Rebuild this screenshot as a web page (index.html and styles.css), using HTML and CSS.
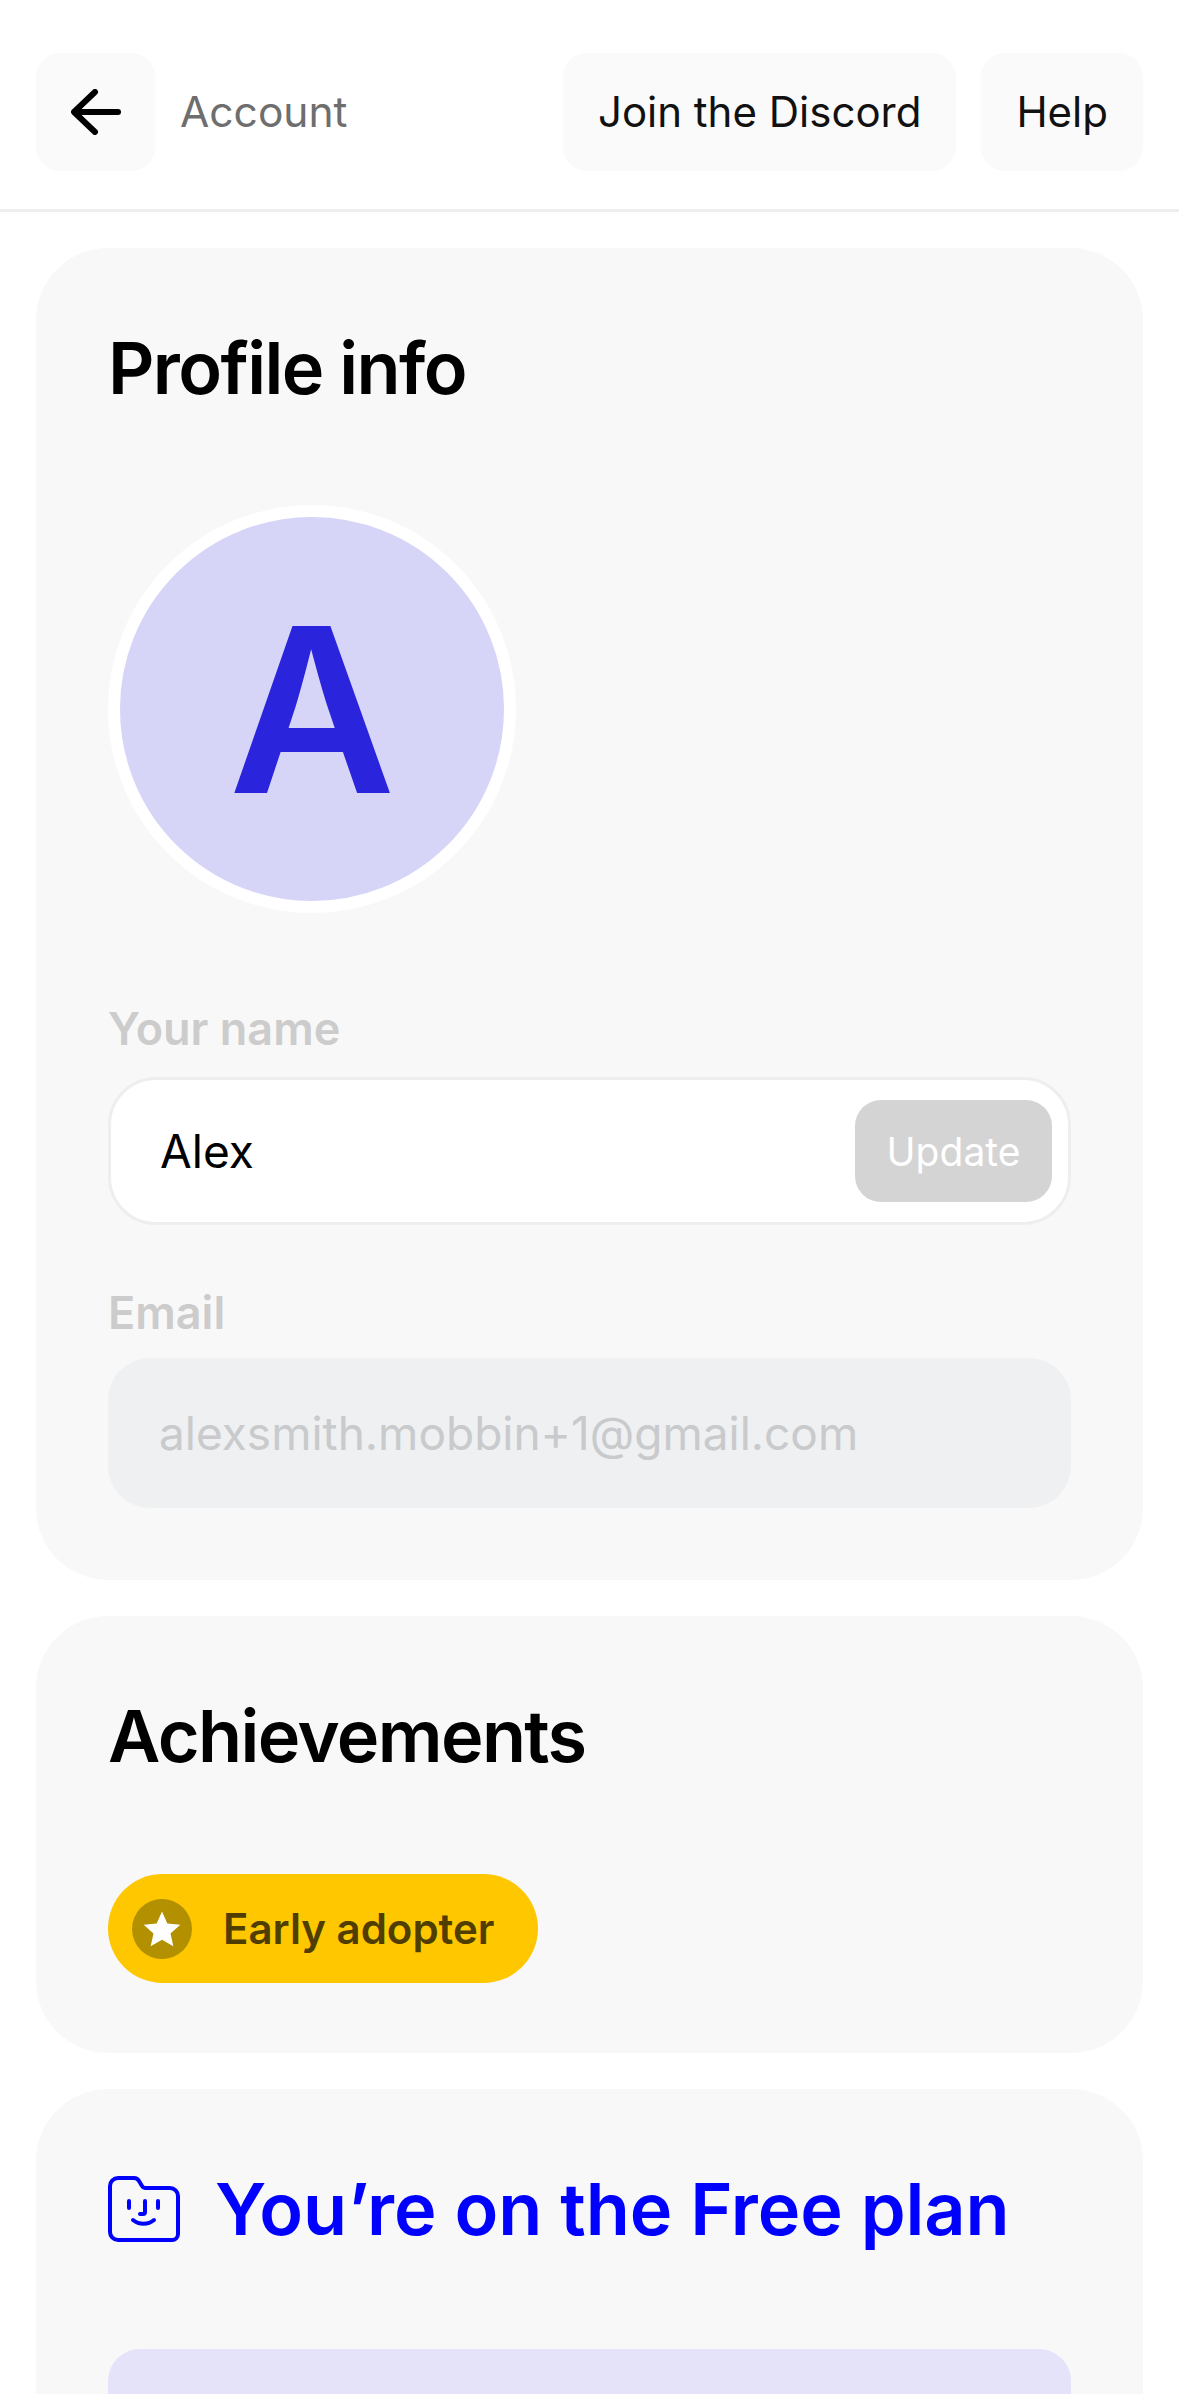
FILE: index.html
```html
<!DOCTYPE html>
<html lang="en">
<head>
    <meta charset="UTF-8">
    <meta name="viewport" content="width=device-width, initial-scale=1.0">
    <title>Account</title>
    <link rel="stylesheet" href="styles.css">
</head>
<body>

<header class="topbar">
    <button class="nav-btn back-btn" aria-label="Back">
        <svg width="50" height="46" viewBox="0 0 50 46" fill="none" stroke="#000" stroke-width="6" stroke-linecap="round" stroke-linejoin="round">
            <path d="M47 23H4"/>
            <path d="M24 3L3 23L24 43"/>
        </svg>
    </button>
    <span class="page-title">Account</span>
    <button class="nav-btn">Join the Discord</button>
    <button class="nav-btn">Help</button>
</header>

<main class="content">
    <section class="card profile">
        <h2>Profile info</h2>
        <div class="avatar">A</div>

        <label class="field-label first">Your name</label>
        <div class="name-field">
            <span>Alex</span>
            <button class="update-btn">Update</button>
        </div>

        <label class="field-label">Email</label>
        <div class="email-field">alexsmith.mobbin+1@gmail.com</div>
    </section>

    <section class="card achievements">
        <h2>Achievements</h2>
        <div class="badge">
            <span class="badge-icon">
                <svg width="40" height="40" viewBox="0 0 24 24" fill="#fff"><path d="M12 1.500l3.200 7.200 7.800.8-5.900 5.200 1.700 7.700L12 18.400l-6.800 4 1.700-7.700L1 9.500l7.800-.8z"/></svg>
            </span>
            Early adopter
        </div>
    </section>

    <section class="card plan">
        <h2 class="plan-title">
            <svg width="72" height="66" viewBox="0 0 72 66" fill="none" stroke="#0000ff" stroke-width="4" stroke-linecap="round" stroke-linejoin="round">
                <path d="M2 10a8 8 0 0 1 8-8h16a6 6 0 0 1 5 3l3 5a4 4 0 0 0 3 2h25a8 8 0 0 1 8 8v38a6 6 0 0 1-6 6H10a8 8 0 0 1-8-8z"/>
                <path d="M21 25v7M50 25v7"/>
                <path d="M37 25v11a2 2 0 0 1-2 2h-3"/>
                <path d="M25 44c6 5 15 5 21 0"/>
            </svg>
            You’re on the Free plan
        </h2>
        <div class="plan-box"></div>
    </section>
</main>

</body>
</html>
```

FILE: styles.css
```css
html, body {
    height: 2396px;
    overflow: hidden;
}
body {
    margin: 0;
    background: white;
    font-family: Inter, "Noto Sans", sans-serif;
    color: #000;
}
button {
    font-family: inherit;
    border: none;
    cursor: pointer;
}
.topbar {
    display: flex;
    align-items: center;
    gap: 25px;
    height: 212px;
    padding: 54px 36px 40px;
    box-sizing: border-box;
    border-bottom: 3px solid #eeeeee;
}
.nav-btn {
    height: 118px;
    padding: 0 35px;
    background: #fafafa;
    border-radius: 24px;
    font-size: 42px;
    color: #111;
}
.back-btn {
    width: 119px;
    padding: 0;
    display: flex;
    align-items: center;
    justify-content: center;
}
.page-title {
    font-size: 42.500px;
    color: #6e6e6e;
    margin-right: auto;
}
.content {
    display: flex;
    flex-direction: column;
    gap: 36px;
    padding: 36px 36px 0;
}
.card {
    background: #f8f8f8;
    border-radius: 72px;
    padding: 76px 72px 70px;
}
.profile {
    padding-bottom: 72px;
}
.card h2 {
    margin: 0;
    font-size: 72px;
    line-height: 88px;
    font-weight: 600;
    letter-spacing: -1.600px;
}
.avatar {
    width: 384px;
    height: 384px;
    margin-top: 93px;
    border: 12px solid white;
    border-radius: 50%;
    background: #d6d4f7;
    color: #2a24dc;
    font-size: 229px;
    font-weight: 600;
    display: flex;
    align-items: center;
    justify-content: center;
}
.field-label {
    display: block;
    margin-top: 62px;
    margin-bottom: 19px;
    font-size: 45px;
    line-height: 52px;
    font-weight: 600;
    color: #cccccc;
}
.field-label.first {
    margin-top: 90px;
    margin-bottom: 22px;
}
.name-field {
    display: flex;
    align-items: center;
    justify-content: space-between;
    height: 148px;
    box-sizing: border-box;
    padding: 0 16px 0 49px;
    background: white;
    border: 3px solid #eeeeee;
    border-radius: 48px;
    font-size: 46px;
}
.update-btn {
    width: 197px;
    height: 102px;
    background: #d4d4d4;
    border-radius: 26px;
    color: white;
    font-size: 39px;
    font-weight: 400;
}
.email-field {
    height: 150px;
    box-sizing: border-box;
    padding-left: 51px;
    display: flex;
    align-items: center;
    background: #eff0f2;
    border-radius: 42px;
    font-size: 46px;
    color: #c8cacc;
}
.badge {
    display: inline-flex;
    align-items: center;
    gap: 31px;
    height: 109px;
    margin-top: 94px;
    padding: 0 43px 0 24px;
    background: #ffc700;
    border-radius: 55px;
    font-size: 42px;
    font-weight: 600;
    color: #4f3e00;
    vertical-align: top;
}
.badge-icon {
    width: 60px;
    height: 60px;
    border-radius: 50%;
    background: #b39000;
    display: flex;
    align-items: center;
    justify-content: center;
}
.plan {
    padding-bottom: 0;
    border-radius: 72px 72px 0 0;
}
.card .plan-title {
    display: flex;
    align-items: center;
    gap: 35px;
    color: #0000ff;
    letter-spacing: -0.100px;
}
.plan-box {
    height: 45px;
    margin-top: 96px;
    background: #e5e3fa;
    border-radius: 32px 32px 0 0;
}
```
